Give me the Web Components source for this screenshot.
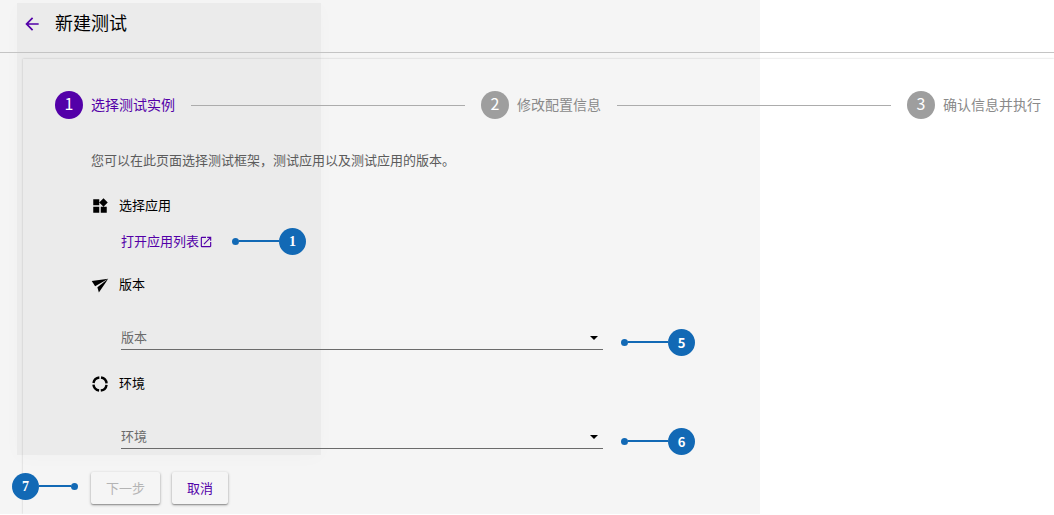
<!DOCTYPE html>
<html lang="zh-CN">
<head>
<meta charset="utf-8">
<title>新建测试</title>
<style>
html { height: 100%; background: #fff; }
body { margin: 0; font-family: "Noto Sans CJK SC", sans-serif; font-size: 13px; color: #000; --accent: #5300a8; --mark: #1269b5; }
</style>
</head>
<body>
<test-page></test-page>
<script>
const define = (name, html, setup) => {
  const template = document.createElement('template');
  template.innerHTML = html;
  customElements.define(name, class extends HTMLElement {
    connectedCallback() {
      if (this.shadowRoot) return;
      this.attachShadow({ mode: 'open' }).append(template.content.cloneNode(true));
      if (setup) setup(this, this.shadowRoot);
    }
  });
};

const ICONS = {
  back: '<path d="M20 11H7.83l5.59-5.59L12 4l-8 8 8 8 1.41-1.41L7.83 13H20v-2z"/>',
  widgets: '<path d="M13 13v8h8v-8h-8zM3 21h8v-8H3v8zM3 3v8h8V3H3zm13.66-1.31L11 7.34 16.66 13l5.66-5.66-5.66-5.65z"/>',
  open: '<path d="M19 19H5V5h7V3H5a2 2 0 0 0-2 2v14a2 2 0 0 0 2 2h14c1.1 0 2-.9 2-2v-7h-2v7zM14 3v2h3.590l-9.830 9.830 1.410 1.410L19 6.410V10h2V3h-7z"/>',
  send: '<path d="M1 6.500 23 3.500 5.500 13.500z"/><path d="M23 3.500 10.500 22 8.500 15z"/>',
  ring: '<circle cx="12" cy="12" r="8.8" fill="none" stroke="currentColor" stroke-width="3.2" stroke-dasharray="11.5 2.32" stroke-dashoffset="-1.16"/>'
};

define('app-icon', `
<style>
:host { display: block; width: 20px; height: 20px; flex: none; }
svg { display: block; width: 100%; height: 100%; fill: currentColor; }
</style>
<svg viewBox="0 0 24 24" aria-hidden="true"></svg>`, (host, root) => {
  root.querySelector('svg').innerHTML = ICONS[host.getAttribute('name')];
});

define('page-header', `
<style>
:host { display: flex; align-items: center; gap: 13px; height: 53px; padding: 0 22px; border-bottom: 1px solid #c4c4c4; box-sizing: border-box; }
a { display: block; margin-bottom: 4px; color: var(--accent); }
h1 { margin: 0 0 8px; font-size: 18px; line-height: 26px; font-weight: 400; }
</style>
<a href="#" aria-label="返回"><app-icon name="back"></app-icon></a>
<h1><slot></slot></h1>`);

define('step-item', `
<style>
:host { display: flex; align-items: center; gap: 8px; flex: none; color: #8a8a8a; font-size: 14px; line-height: 20px; white-space: nowrap; }
:host([active]) { color: var(--accent); }
span { padding-bottom: 2px; }
b { box-sizing: border-box; width: 28px; height: 28px; border-radius: 50%; background: #9e9e9e; color: #fff; font-weight: 400; font-size: 16px; line-height: 24px; text-align: center; }
:host([active]) b { background: var(--accent); }
</style>
<b></b><span><slot></slot></span>`, (host, root) => {
  root.querySelector('b').textContent = host.getAttribute('number');
});

define('step-bar', `
<style>
:host { display: flex; align-items: center; gap: 16px; }
i { flex: 1; height: 1px; background: #acacac; }
</style>
<step-item number="1" active>选择测试实例</step-item><i></i>
<step-item number="2">修改配置信息</step-item><i></i>
<step-item number="3">确认信息并执行</step-item>`);

define('call-out', `
<style>
:host { display: flex; align-items: center; flex: none; width: 74px; height: 28px; }
:host([flip]) { flex-direction: row-reverse; width: 66px; }
u { width: 7px; height: 7px; border-radius: 50%; background: var(--mark); }
i { flex: 1; height: 2px; background: var(--mark); }
b { width: 27px; height: 27px; border-radius: 50%; background: var(--mark); color: #fff; font: 700 13px/27px "Noto Sans CJK SC", sans-serif; text-align: center; }
:host([serif]) b { font-family: "Liberation Serif", serif; font-size: 14px; }
</style>
<u></u><i></i><b><slot></slot></b>`);

define('form-section', `
<style>
:host { display: block; }
h2 { display: flex; align-items: center; gap: 10px; margin: 0; font-size: 13px; line-height: 20px; font-weight: 400; }
h2 div { padding-top: 2px; }
h2 app-icon { width: 18px; height: 18px; }
</style>
<h2><div></div><span></span></h2><slot></slot>`, (host, root) => {
  root.querySelector('span').textContent = host.getAttribute('heading');
  const icon = document.createElement('app-icon');
  icon.setAttribute('name', host.getAttribute('icon'));
  root.querySelector('h2 div').append(icon);
});

define('select-field', `
<style>
:host { display: block; position: relative; width: 482px; }
select { display: block; width: 100%; height: 25px; margin: 0; padding: 0 24px 1px 0; border: 0; border-bottom: 1px solid #6b6b6b; border-radius: 0; background: none; appearance: none; color: #6b6b6b; font: inherit; line-height: 20px; }
svg { position: absolute; right: 5px; top: 11px; width: 8px; height: 4px; pointer-events: none; }
</style>
<select><option></option></select><svg viewBox="0 0 8 4" aria-hidden="true"><path d="M0 0h8L4 4z"/></svg>`, (host, root) => {
  const name = host.getAttribute('label');
  root.querySelector('option').textContent = name;
  root.querySelector('select').setAttribute('aria-label', name);
});

define('raised-button', `
<style>
:host { display: block; }
button { display: block; height: 32px; padding: 0 15px; border: 0; border-radius: 2px; background: #f5f5f5; color: var(--accent); font: inherit; line-height: 32px; box-shadow: 0 1px 3px #0005, 0 1px 1px #0003; }
button:disabled { color: #b4b4b4; }
</style>
<button type="button"><slot></slot></button>`, (host, root) => {
  root.querySelector('button').disabled = host.hasAttribute('disabled');
});

define('test-page', `
<style>
:host { display: block; position: relative; isolation: isolate; overflow: hidden; }
.tone { position: absolute; z-index: -1; left: 0; top: 0; width: 760px; bottom: 0; background: #f5f5f5; overflow: hidden; }
.tone::after { content: ""; position: absolute; left: 17px; top: 3px; width: 304px; bottom: 59px; background: #ebebeb; box-shadow: 0 3px 18px #00000005; }
main { margin: 6px 0 0 23px; padding: 32px 13px 10px 32px; box-shadow: 0 0 2px #0003; }
.body { padding: 31px 0 0 36px; }
p { margin: 0 0 25px; color: #5c5c5c; line-height: 20px; }
.row { display: flex; align-items: center; gap: 19px; padding-left: 30px; }
.link { padding-top: 12px; padding-bottom: 19px; }
a { display: flex; align-items: center; color: var(--accent); text-decoration: none; line-height: 20px; }
a app-icon { width: 14px; height: 14px; padding-top: 2px; }
.field { align-items: flex-start; gap: 18px; padding-top: 31px; padding-bottom: 23px; }
.field call-out { margin: 3px 0 -8px; }
.actions { position: relative; display: flex; gap: 12px; }
.actions call-out { position: absolute; left: -79px; top: 0; }
</style>
<div class="tone"></div>
<page-header>新建测试</page-header>
<main>
<step-bar></step-bar>
<div class="body">
<p>您可以在此页面选择测试框架，测试应用以及测试应用的版本。</p>
<form-section icon="widgets" heading="选择应用"><div class="row link"><a href="#">打开应用列表<app-icon name="open"></app-icon></a><call-out serif>1</call-out></div></form-section>
<form-section icon="send" heading="版本"><div class="row field"><select-field label="版本"></select-field><call-out>5</call-out></div></form-section>
<form-section icon="ring" heading="环境"><div class="row field"><select-field label="环境"></select-field><call-out>6</call-out></div></form-section>
<div class="actions"><call-out flip serif>7</call-out><raised-button disabled>下一步</raised-button><raised-button>取消</raised-button></div>
</div>
</main>`);
</script>
</body>
</html>
